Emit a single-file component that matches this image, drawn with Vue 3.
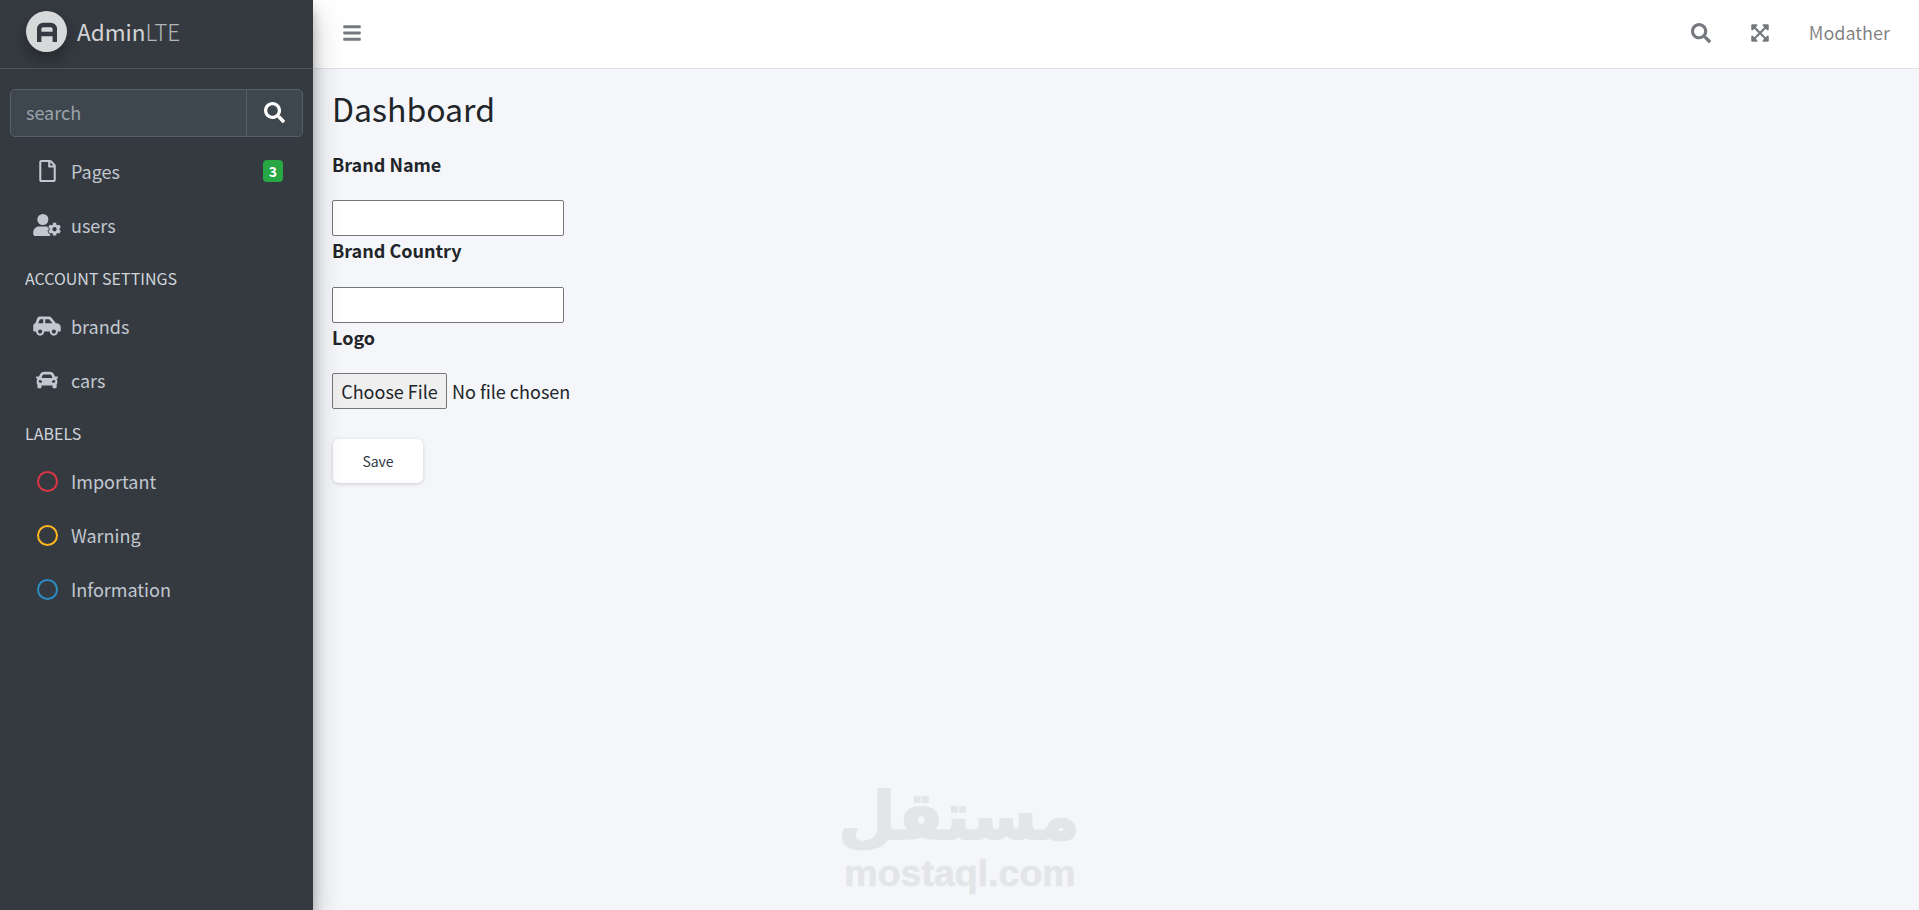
<template>
  <div class="layout">
    <aside class="sidebar">
      <a class="brand">
        <span class="brand-logo">
          <svg viewBox="0 0 41 41" width="41" height="41">
            <path d="M13.2 31V18a4 4 0 0 1 4-4h7.6a4 4 0 0 1 4 4V31M13.2 23h15.6" fill="none" stroke="#343a40" stroke-width="4.4" />
          </svg>
        </span>
        <span class="brand-text"><span>Admin</span><span class="light">LTE</span></span>
      </a>

      <div class="search">
        <input class="search-input" type="text" placeholder="search" />
        <button class="search-btn">
          <svg viewBox="0 0 512 512" width="21" height="21"><path fill="#fff" :d="icons.search" /></svg>
        </button>
      </div>

      <nav class="nav">
        <template v-for="item in nav" :key="item.label">
          <div v-if="item.header" class="nav-header">{{ item.label }}</div>
          <a v-else class="nav-link">
            <span class="nav-icon">
              <span v-if="item.ring" class="ring" :style="{ borderColor: item.ring }"></span>
              <svg v-else-if="item.icon === 'userCog'" viewBox="0 0 640 512" width="28" height="22">
                <circle cx="224" cy="128" r="128" fill="#c2c7d0" />
                <path fill="#c2c7d0" d="M134.4 288h179.2c30 0 58 10 80 27v197H48c-26.5 0-48-21.5-48-48v-41.6C0 348.2 60.2 288 134.4 288z" />
                <path fill="#c2c7d0" stroke="#343a40" stroke-width="34" paint-order="stroke" fill-rule="evenodd" :d="icons.gear" />
              </svg>
              <svg v-else :viewBox="icons[item.icon].box" :width="icons[item.icon].w" :height="icons[item.icon].h">
                <path fill="#c2c7d0" :d="icons[item.icon].d" />
              </svg>
            </span>
            <span class="nav-text">{{ item.label }}</span>
            <span v-if="item.badge" class="badge">{{ item.badge }}</span>
          </a>
        </template>
      </nav>
    </aside>

    <div class="wrapper">
      <header class="topbar">
        <svg class="bars" viewBox="0 0 448 512" width="18" height="20"><path fill="#75797d" :d="icons.bars" /></svg>
        <div class="topbar-right">
          <svg viewBox="0 0 512 512" width="20" height="20"><path fill="#75797d" :d="icons.search" /></svg>
          <svg class="expand" viewBox="0 0 448 512" width="18" height="20"><path fill="#75797d" :d="icons.expand" /></svg>
          <span class="user">Modather</span>
        </div>
      </header>

      <main class="content">
        <h1>Dashboard</h1>
        <form class="brand-form" @submit.prevent>
          <label>Brand Name</label>
          <input class="field" type="text" />
          <label>Brand Country</label>
          <input class="field" type="text" />
          <label>Logo</label>
          <input class="file" type="file" />
          <button class="save">Save</button>
        </form>
        <div class="watermark">
          <div class="wm-ar" dir="rtl">مستقل</div>
          <div class="wm-en">mostaql.com</div>
        </div>
      </main>
    </div>
  </div>
</template>

<script setup>
const icons = {
  search: 'M505 442.7L405.3 343c-4.5-4.5-10.6-7-17-7H372c27.6-35.3 44-79.7 44-128C416 93.1 322.9 0 208 0S0 93.1 0 208s93.1 208 208 208c48.3 0 92.7-16.4 128-44v16.3c0 6.4 2.5 12.5 7 17l99.7 99.7c9.4 9.4 24.6 9.4 33.9 0l28.3-28.3c9.4-9.4 9.4-24.6.1-34zM208 336c-70.7 0-128-57.2-128-128 0-70.7 57.2-128 128-128 70.7 0 128 57.2 128 128 0 70.7-57.2 128-128 128z',
  bars: 'M16 132h416c8.837 0 16-7.163 16-16V76c0-8.837-7.163-16-16-16H16C7.163 60 0 67.163 0 76v40c0 8.837 7.163 16 16 16zm0 160h416c8.837 0 16-7.163 16-16v-40c0-8.837-7.163-16-16-16H16c-8.837 0-16 7.163-16 16v40c0 8.837 7.163 16 16 16zm0 160h416c8.837 0 16-7.163 16-16v-40c0-8.837-7.163-16-16-16H16c-8.837 0-16 7.163-16 16v40c0 8.837 7.163 16 16 16z',
  expand: 'M448 344v112a23.94 23.94 0 0 1-24 24H312c-21.39 0-32.09-25.9-17-41l36.2-36.2L224 295.6 116.77 402.9 153 439c15.09 15.1 4.39 41-17 41H24a23.94 23.94 0 0 1-24-24V344c0-21.4 25.89-32.1 41-17l36.19 36.2L184.46 256 77.18 148.7 41 185c-15.1 15.1-41 4.4-41-17V56a23.94 23.94 0 0 1 24-24h112c21.39 0 32.09 25.9 17 41l-36.2 36.2L224 216.4l107.23-107.3L295 73c-15.09-15.1-4.39-41 17-41h112a23.94 23.94 0 0 1 24 24v112c0 21.4-25.89 32.1-41 17l-36.19-36.2L263.54 256l107.28 107.3L407 327.1c15.1-15.2 41-4.5 41 16.9z',
  gear: 'M610.5 373.3c2.6-14.1 2.6-28.5 0-42.6l25.8-14.9c3-1.7 4.3-5.2 3.3-8.5-6.7-21.6-18.2-41.2-33.2-57.4-2.3-2.5-6-3.1-9-1.4l-25.8 14.9c-10.9-9.3-23.4-16.5-36.9-21.3v-29.8c0-3.4-2.4-6.4-5.7-7.1-22.3-5-45-4.8-66.2 0-3.3.7-5.7 3.7-5.7 7.1v29.8c-13.5 4.8-26 12-36.9 21.3l-25.8-14.9c-2.9-1.7-6.7-1.1-9 1.4-15 16.2-26.5 35.8-33.2 57.4-1 3.3.4 6.8 3.3 8.5l25.8 14.9c-2.6 14.1-2.6 28.5 0 42.6l-25.8 14.9c-3 1.7-4.3 5.2-3.3 8.5 6.7 21.6 18.2 41.1 33.2 57.4 2.3 2.5 6 3.1 9 1.4l25.8-14.9c10.9 9.3 23.4 16.5 36.9 21.3v29.8c0 3.4 2.4 6.4 5.7 7.1 22.3 5 45 4.8 66.2 0 3.3-.7 5.7-3.7 5.7-7.1v-29.8c13.5-4.8 26-12 36.9-21.3l25.8 14.9c2.9 1.7 6.7 1.1 9-1.4 15-16.2 26.5-35.8 33.2-57.4 1-3.3-.4-6.8-3.3-8.5l-25.8-14.9zM496 400.5c-26.8 0-48.5-21.8-48.5-48.5s21.8-48.5 48.5-48.5 48.5 21.8 48.5 48.5-21.7 48.5-48.5 48.5z',
  file: {
    box: '0 0 384 512', w: 17, h: 22,
    d: 'M369.9 97.9L286 14C277 5 264.8-.1 252.1-.1H48C21.5 0 0 21.5 0 48v416c0 26.5 21.5 48 48 48h288c26.5 0 48-21.5 48-48V131.9c0-12.7-5.1-25-14.1-34zM332.1 128H256V51.9l76.1 76.1zM48 464V48h160v104c0 13.3 10.7 24 24 24h104v288H48z'
  },
  carSide: {
    box: '0 0 640 512', w: 28, h: 22,
    d: 'M544 192h-16L419.22 56.02A64.025 64.025 0 0 0 369.24 32H155.33c-26.17 0-49.7 15.93-59.42 40.23L48 194.26C20.44 201.4 0 226.21 0 256v112c0 8.84 7.16 16 16 16h48c0 53.02 42.98 96 96 96s96-42.98 96-96h128c0 53.02 42.98 96 96 96s96-42.98 96-96h48c8.84 0 16-7.16 16-16v-80c0-53.02-42.98-96-96-96zM160 432c-26.47 0-48-21.53-48-48s21.53-48 48-48 48 21.53 48 48-21.53 48-48 48zm72-240H116.93l38.4-96H232v96zm48 0V96h89.24l76.8 96H280zm200 240c-26.47 0-48-21.53-48-48s21.53-48 48-48 48 21.53 48 48-21.53 48-48 48z'
  },
  car: {
    box: '0 0 512 512', w: 22, h: 22,
    d: 'M499.99 176h-59.87l-16.64-41.6C406.38 91.63 365.57 64 319.5 64h-127c-46.06 0-86.88 27.63-103.99 70.4L71.87 176H12.01C4.2 176-1.53 183.34.37 190.91l6 24C7.7 220.25 12.5 224 18.01 224h20.07C24.65 235.73 16 252.78 16 272v48c0 16.12 6.16 30.67 16 41.93V416c0 17.67 14.33 32 32 32h32c17.67 0 32-14.33 32-32v-32h256v32c0 17.67 14.33 32 32 32h32c17.67 0 32-14.33 32-32v-54.07c9.84-11.25 16-25.8 16-41.93v-48c0-19.22-8.65-36.27-22.07-48H494c5.51 0 10.31-3.75 11.64-9.09l6-24c1.89-7.57-3.84-14.91-11.65-14.91zm-352.06-17.83c7.29-18.22 24.94-30.17 44.57-30.17h127c19.63 0 37.28 11.95 44.57 30.17L384 208H128l19.93-49.83zM96 319.8c-19.2 0-32-12.76-32-31.9S76.8 256 96 256s48 28.71 48 47.85-28.8 15.95-48 15.95zm320 0c-19.2 0-48 3.19-48-15.95S396.8 256 416 256s32 12.76 32 31.9-12.8 31.9-32 31.9z'
  }
}

const nav = [
  { label: 'Pages', icon: 'file', badge: '3' },
  { label: 'users', icon: 'userCog' },
  { label: 'ACCOUNT SETTINGS', header: true },
  { label: 'brands', icon: 'carSide' },
  { label: 'cars', icon: 'car' },
  { label: 'LABELS', header: true },
  { label: 'Important', ring: '#dc3545' },
  { label: 'Warning', ring: '#fdb81e' },
  { label: 'Information', ring: '#2d8cc4' }
]
</script>

<style>
html, body { margin: 0; height: 100%; background: #f4f6f9; overflow: hidden; }
</style>

<style scoped>
.layout { display: flex; height: 910px; font-family: "Noto Sans CJK SC", "Noto Sans", sans-serif; font-size: 18px; line-height: 27px; color: #212529; background: #f4f6f9; }

.sidebar { width: 313px; flex-shrink: 0; background: #343a40; position: relative; z-index: 2; box-shadow: 0 14px 28px rgba(0,0,0,.25), 0 10px 10px rgba(0,0,0,.22); }
.brand { display: flex; align-items: center; height: 69px; padding: 0 0 6px 26px; box-sizing: border-box; border-bottom: 1px solid #4b545c; margin-bottom: 20px; }
.brand-logo { width: 41px; height: 41px; border-radius: 50%; background: #d6d8da; box-shadow: 0 8px 16px rgba(0,0,0,.3); display: flex; }
.brand-text { margin-left: 10px; font-size: 22.5px; color: rgba(255,255,255,.8); }
.brand-text .light { font-weight: 300; opacity: .8; }

.search { display: flex; height: 48px; margin: 0 10px 7px; box-sizing: border-box; border: 1px solid #56606a; border-radius: 5px; background: #3f474e; overflow: hidden; }
.search-input { flex: 1; min-width: 0; border: 0; outline: 0; background: transparent; padding: 0 15px 2px; font: inherit; color: #fff; }
.search-input::placeholder { color: #9aa3ab; opacity: 1; }
.search-btn { width: 56px; flex-shrink: 0; border: 0; border-left: 1px solid #56606a; background: transparent; padding: 0 0 1px; display: flex; align-items: center; justify-content: center; }

.nav-link { display: flex; align-items: center; height: 54px; padding: 0 30px 0 33px; color: #c2c7d0; }
.nav-icon { width: 28px; margin-right: 10px; display: flex; justify-content: center; align-items: center; }
.nav-text { flex: 1; }
.ring { width: 21px; height: 21px; box-sizing: border-box; border: 2.5px solid; border-radius: 50%; }
.badge { background: #28a745; color: #fff; font-size: 14px; font-weight: 700; line-height: 22px; width: 20px; text-align: center; border-radius: 4px; }
.nav-header { height: 47px; box-sizing: border-box; padding: 13px 0 6px 25px; font-size: 16px; color: #d0d4db; }

.wrapper { flex: 1; display: flex; flex-direction: column; min-width: 0; }
.topbar { height: 69px; flex-shrink: 0; box-sizing: border-box; background: #fff; border-bottom: 1px solid #dee2e6; display: flex; align-items: center; justify-content: space-between; padding: 0 29px 2px 30px; }
.topbar-right { display: flex; align-items: center; }
.expand { margin-left: 40px; }
.user { margin-left: 40px; padding-bottom: 2px; color: rgba(0,0,0,.5); }

.content { flex: 1; position: relative; padding: 20px 19px; }
h1 { margin: 0 0 24px; font-size: 32px; font-weight: 400; line-height: 38px; }
.brand-form { display: flex; flex-direction: column; align-items: flex-start; }
label { font-weight: 700; height: 27px; margin-bottom: 23px; display: block; }
label:first-child { margin-bottom: 22px; }
.field { width: 232px; height: 36px; box-sizing: border-box; border: 1px solid #767676; border-radius: 2px; background: #fff; margin-bottom: 1px; }
.file { font: inherit; width: 300px; height: 36px; margin-top: -1px; color: #212529; }
.file::file-selector-button { font: inherit; height: 36px; width: 115px; padding: 0; margin-right: 5px; background: #efefef; border: 1px solid #767676; border-radius: 2px; color: #212529; }
.save { margin-top: 30px; margin-left: 1px; width: 90px; height: 44px; border: 0; border-radius: 6px; background: #fff; box-shadow: 0 1px 4px rgba(0,0,0,.16); font: inherit; font-size: 14px; color: #2f3a45; }

.watermark { position: absolute; left: 527px; top: 709px; width: 240px; text-align: center; color: #e3e5e9; }
.wm-ar { font-family: "DejaVu Sans", sans-serif; font-weight: 700; font-size: 66px; line-height: 78px; -webkit-text-stroke: 2px #e3e5e9; }
.wm-en { font-family: "Liberation Sans", sans-serif; font-weight: 700; font-size: 37.5px; line-height: 34px; -webkit-text-stroke: .5px #e3e5e9; }
</style>
